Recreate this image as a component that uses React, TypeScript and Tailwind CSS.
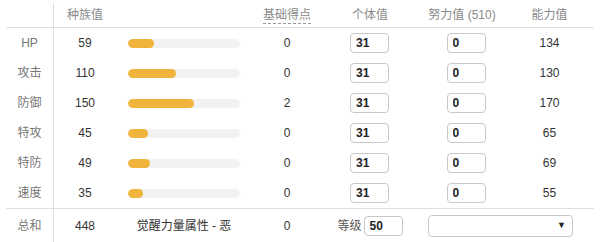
import React from 'react';

const stats = [
  { name: 'HP', base: 59, pt: 0, iv: 31, ev: 0, total: 134 },
  { name: '攻击', base: 110, pt: 0, iv: 31, ev: 0, total: 130 },
  { name: '防御', base: 150, pt: 2, iv: 31, ev: 0, total: 170 },
  { name: '特攻', base: 45, pt: 0, iv: 31, ev: 0, total: 65 },
  { name: '特防', base: 49, pt: 0, iv: 31, ev: 0, total: 69 },
  { name: '速度', base: 35, pt: 0, iv: 31, ev: 0, total: 55 },
];

const cols = 'grid grid-cols-[48px_62px_136px_70px_96px_96px_71px] items-center';

const Box: React.FC<{ value: number; w?: string }> = ({ value, w = 'w-[39px]' }) => (
  <input
    readOnly
    value={value}
    className={`${w} h-[20px] rounded-[4px] border border-[#c8c8c8] bg-white pl-[5px] text-[12px] font-bold text-[#222] outline-none`}
  />
);

export default function App() {
  return (
    <div className="w-[600px] h-[242px] bg-white px-[6px] pt-[3px] text-[12px] text-[#333] font-['Liberation_Sans','Noto_Sans_CJK_SC',sans-serif]">
      {/* Header */}
      <div className={`${cols} h-[25px] border-b border-[#dcdfe6] text-[#8a8a8a]`}>
        <div className="h-full border-r border-[#dcdfe6]" />
        <div className="text-center pb-[1px]">种族值</div>
        <div />
        <div className="text-center">
          <span className="border-b border-dashed border-[#999] pb-[1px]">基础得点</span>
        </div>
        <div className="text-center">个体值</div>
        <div className="text-center pr-[8px]">努力值 (510)</div>
        <div className="text-center">能力值</div>
      </div>

      {/* Stat rows */}
      <div className="border-b border-[#dcdfe6]">
        {stats.map((s) => (
          <div key={s.name} className={`${cols} h-[30px]`}>
            <div className="h-full flex items-center justify-center border-r border-[#dcdfe6] text-[#777]">{s.name}</div>
            <div className="text-center">{s.base}</div>
            <div className="pl-[12px]">
              <div className="w-[112px] h-[9px] rounded-full bg-[#f2f2f2] overflow-hidden">
                <div
                  className="h-full rounded-full bg-[#f0b43c]"
                  style={{ width: `${Math.round((s.base / 255) * 112)}px` }}
                />
              </div>
            </div>
            <div className="text-center">{s.pt}</div>
            <div className="flex justify-center pr-[1px]">
              <Box value={s.iv} />
            </div>
            <div className="flex justify-center">
              <Box value={s.ev} />
            </div>
            <div className="text-center">{s.total}</div>
          </div>
        ))}
      </div>

      {/* Total row */}
      <div className={`${cols} h-[34px]`}>
        <div className="h-full flex items-center justify-center border-r border-[#dcdfe6] text-[#777]">总和</div>
        <div className="text-center">448</div>
        <div className="text-center">觉醒力量属性 - 恶</div>
        <div className="text-center">0</div>
        <div className="flex items-center justify-center gap-[2px]">
          <span className="text-[#555]">等级</span>
          <Box value={50} />
        </div>
        <div className="col-span-2 flex pl-[10px]">
          <div className="w-[145px] h-[22px] rounded-[4px] border border-[#c8c8c8] bg-white flex items-center justify-end pr-[6px]">
            <span className="text-[9px] text-[#222]">▼</span>
          </div>
        </div>
      </div>
    </div>
  );
}
